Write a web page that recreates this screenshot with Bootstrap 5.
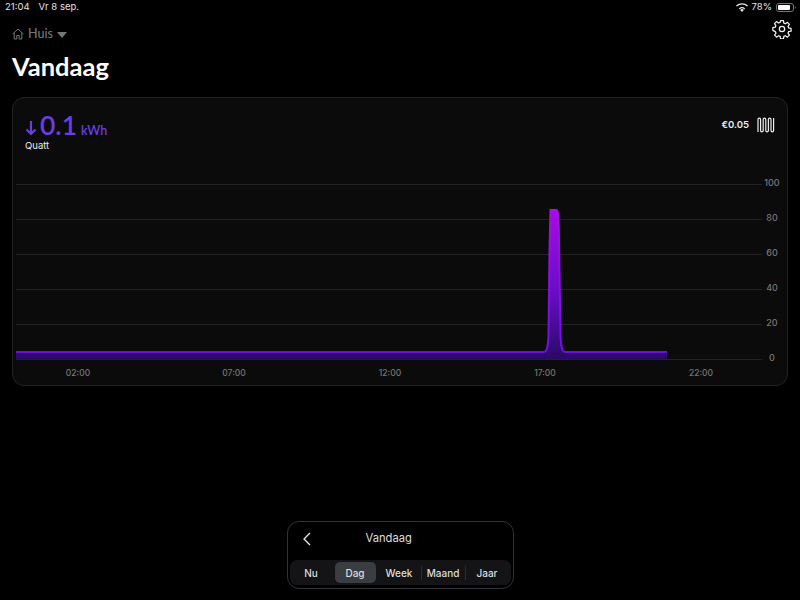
<!doctype html>
<html lang="nl"><head><meta charset="utf-8"><title>Vandaag</title>
<link rel="stylesheet" href="https://cdn.jsdelivr.net/npm/bootstrap@5.3.0/dist/css/bootstrap.min.css">
<style>
html,body{height:100%}
body{width:800px;height:600px;background:#000;color:#fff;font-family:Lato,"Liberation Sans",sans-serif;overflow:hidden}
.shell{height:600px}
.statusbar{height:14px;padding:0 4px 0 5px;font:400 9.5px/14px Inter,"Liberation Sans",sans-serif;color:#e4e4e4}
.statusbar .dt{margin-left:9px}
.crumbs{height:32px;padding:3px 8px 0 12px;margin-top:2px;color:#777}
.crumb-left{margin-top:9px}
.crumb-txt{font-size:12.5px;font-weight:500;line-height:1}
.caret{width:0;height:0;border-left:5.5px solid transparent;border-right:5.5px solid transparent;border-top:6px solid #777;margin-top:1px}
.pagetitle{font-size:25.5px;font-weight:700;line-height:32px;margin:2px 0 1px 12px}
.panel{margin:14px 12px 0;height:289px;background:#0b0b0b;border:1px solid #222;border-radius:12px;overflow:hidden}
.panel-top{height:72px;padding:12px 12px 0 12px}
.usage{color:#6a3ee0;line-height:1}
.usage .num{font-size:26.5px;font-weight:600;line-height:30px;margin-left:3px}
.usage .unit{font-size:12.5px;font-weight:600;margin-left:4px;padding-bottom:3px}
.who{font:400 9.5px/12px Inter,"Liberation Sans",sans-serif;color:#eee}
.price-wrap{margin-top:7px}
.price{font:600 9.5px/1 Inter,"Liberation Sans",sans-serif;color:#eee}
.chart{display:block}
.chart text{font:500 9px Inter,"Liberation Sans",sans-serif;fill:#777}
.chart .xlab text{font-size:8.500px}
.dock{width:227px;height:68px;margin:0 auto 11px;border:1px solid #333;border-radius:12px;background:#000;padding:0 2px 2px}
.dock-head{height:38px;padding:0 0 5px 13px;font:400 11.200px/1 Inter,"Liberation Sans",sans-serif;color:#ddd}
.dock-title{margin-left:55px}
.seg{height:25px;background:#141416;border-radius:7px;padding:2px 0;font:500 10px/1 Inter,"Liberation Sans",sans-serif;color:#ddd}
.seg-item{width:43px;height:21px;border-radius:5px}
.seg-item.now{background:#3a3d42;width:41px;margin:0 2px}
.seg-sep{width:1px;height:14px;background:#2c2c2e}
</style></head><body>
<div class="shell d-flex flex-column">
 <div class="statusbar d-flex justify-content-between align-items-center">
  <div><span>21:04</span><span class="dt">Vr 8 sep.</span></div>
  <div class="d-flex align-items-center gap-1">
   <svg width="12" height="9" viewBox="0 0 12 9" fill="#e8e8e8"><path d="M6 9 4.200 6.900a2.600 2.600 0 0 1 3.600 0z"/><path d="M2.900 5.500a4.500 4.500 0 0 1 6.200 0l-.8.900a3.300 3.300 0 0 0-4.600 0z"/><path d="M0 2.600a8.800 8.800 0 0 1 12 0l-.9 1a7.500 7.500 0 0 0-10.200 0z"/></svg>
   <span>78%</span>
   <svg width="20" height="9" viewBox="0 0 20 9"><rect x=".5" y=".5" width="17" height="8" rx="2.400" fill="none" stroke="#777"/><rect x="2" y="2" width="12" height="5" rx="1" fill="#fff"/><path d="M18.800 3v3c.7-.3 1-.9 1-1.500s-.3-1.200-1-1.500z" fill="#777"/></svg>
  </div>
 </div>
 <div class="crumbs d-flex justify-content-between align-items-start">
  <div class="crumb-left d-flex align-items-center gap-1">
   <svg width="12" height="12" viewBox="0 0 12 12" fill="none" stroke="#777" stroke-width="1"><path d="M.7 6 6 1l5.300 5M2.200 4.800V11h2.600V7.500h2.400V11h2.600V4.800"/></svg>
   <span class="crumb-txt">Huis</span><span class="caret"></span>
  </div>
  <svg width="20" height="20" viewBox="0 0 24 24" fill="none" stroke="#f2f2f2" stroke-width="1.500" stroke-linejoin="round"><circle cx="12" cy="12" r="3.200"/><path d="M10.300 2h3.400l.5 2.900 1.900.8 2.400-1.700 2.400 2.400-1.700 2.400.8 1.900 2.900.5v3.400l-2.900.5-.8 1.900 1.700 2.400-2.400 2.400-2.400-1.700-1.900.8-.5 2.900h-3.400l-.5-2.900-1.900-.8-2.400 1.700-2.400-2.400 1.700-2.400-.8-1.900L1 13.700v-3.400l2.900-.5.800-1.900L3 5.500l2.400-2.400 2.400 1.700 1.900-.8z"/></svg>
 </div>
 <h1 class="pagetitle">Vandaag</h1>
 <section class="panel">
  <div class="panel-top d-flex justify-content-between align-items-start">
   <div>
    <div class="usage d-flex align-items-end">
     <svg class="mb-1" width="12" height="16" viewBox="0 0 12 16" fill="none" stroke="#6a3ee0" stroke-width="2.200"><path d="M6 1v13M1.500 9.500 6 14l4.500-4.500"/></svg>
     <span class="num">0.1</span><span class="unit">kWh</span>
    </div>
    <div class="who">Quatt</div>
   </div>
   <div class="price-wrap d-flex align-items-center gap-2">
    <span class="price">€0.05</span>
    <svg width="18" height="16" viewBox="0 0 18 16" fill="none" stroke="#eee" stroke-width="1.200"><path d="M1 15V2.500a1.300 1.300 0 0 1 2.600 0V13.500a1.300 1.300 0 0 0 2.600 0V2.500a1.300 1.300 0 0 1 2.600 0V13.500a1.300 1.300 0 0 0 2.600 0V2.500a1.300 1.300 0 0 1 2.600 0V13.500a1.300 1.300 0 0 0 2.600 0V1"/></svg>
   </div>
  </div>
  <svg class="chart" width="774" height="215" viewBox="0 0 774 215">
   <defs>
    <linearGradient id="fillg" gradientUnits="userSpaceOnUse" x1="0" y1="40" x2="0" y2="189"><stop offset="0" stop-color="#a60ce6"/><stop offset=".55" stop-color="#6a0cc8"/><stop offset="1" stop-color="#2a0a66"/></linearGradient>
    <linearGradient id="lineg" gradientUnits="userSpaceOnUse" x1="0" y1="40" x2="0" y2="189"><stop offset="0" stop-color="#a80fe0"/><stop offset="1" stop-color="#6a0fe0"/></linearGradient>
   </defs>
   <path d="M3 14.500H749M3 49.500H749M3 84.500H749M3 119.500H749M3 154.500H749M3 189.500H749" stroke="#232323"/>
   <path d="M3 182H531C534 182 535 176 535.500 165L536.500 80L537.500 40H544C545.500 40 545.800 55 546 70L547.500 165C548 176 549 182 552 182H654V189H3Z" fill="url(#fillg)"/>
   <path d="M3 182H531C534 182 535 176 535.500 165L536.500 80L537.500 40H544C545.500 40 545.800 55 546 70L547.500 165C548 176 549 182 552 182H654" fill="none" stroke="url(#lineg)" stroke-width="2"/>
   <g text-anchor="middle">
    <text x="759" y="16">100</text><text x="759" y="51">80</text><text x="759" y="86">60</text><text x="759" y="121">40</text><text x="759" y="156">20</text><text x="759" y="191">0</text>
    <g class="xlab"><text x="65" y="206">02:00</text><text x="221" y="206">07:00</text><text x="377" y="206">12:00</text><text x="532" y="206">17:00</text><text x="688" y="206">22:00</text></g>
   </g>
  </svg>
 </section>
 <nav class="dock mt-auto">
  <div class="dock-head d-flex align-items-center">
   <svg width="8" height="14" viewBox="0 0 8 14" fill="none" stroke="#eee" stroke-width="1.300"><path d="M7 1 1 7l6 6"/></svg>
   <span class="dock-title">Vandaag</span>
  </div>
  <div class="seg d-flex align-items-center">
   <span class="seg-item d-flex align-items-center justify-content-center">Nu</span>
   <span class="seg-item now d-flex align-items-center justify-content-center">Dag</span>
   <span class="seg-item d-flex align-items-center justify-content-center">Week</span>
   <span class="seg-sep"></span>
   <span class="seg-item d-flex align-items-center justify-content-center">Maand</span>
   <span class="seg-sep"></span>
   <span class="seg-item d-flex align-items-center justify-content-center">Jaar</span>
  </div>
 </nav>
</div>
</body></html>
